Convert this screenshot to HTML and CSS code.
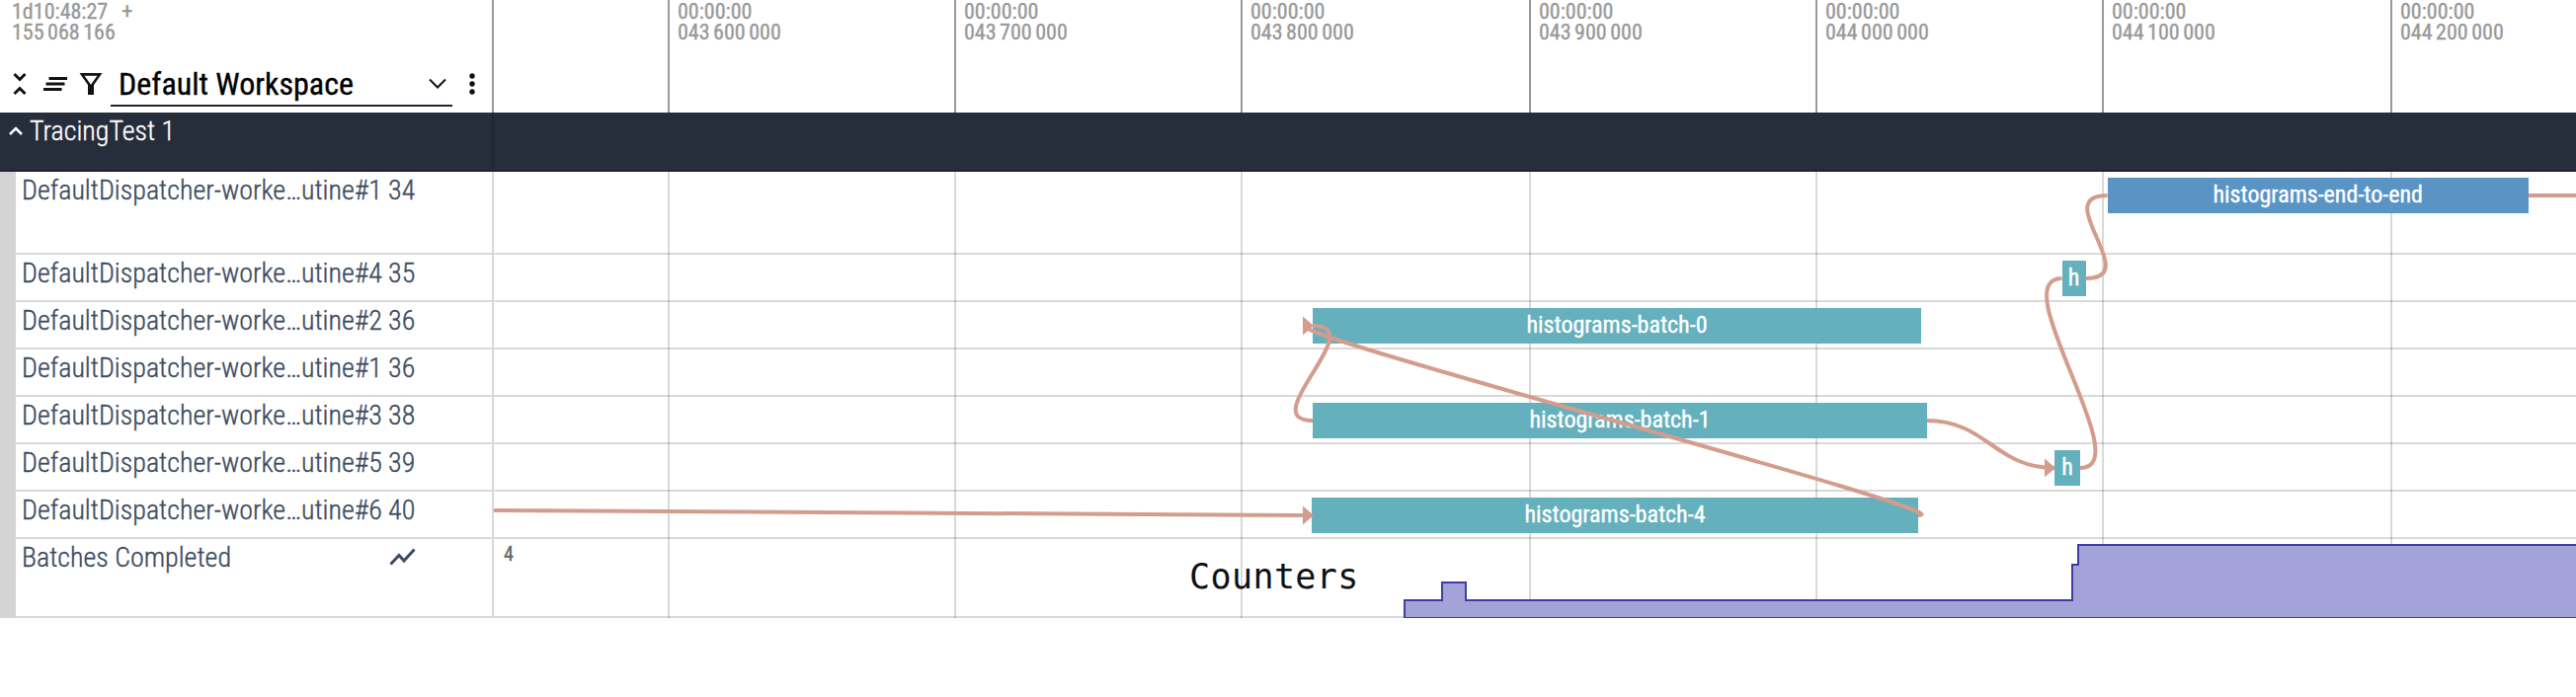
FILE: index.html
```html
<!DOCTYPE html>
<html lang="en">
<head>
<meta charset="utf-8">
<title>Trace timeline</title>
<link rel="stylesheet" href="styles.css">
</head>
<body>
<header class="header">
  <div class="shell">
    <div class="stamp"><div>1d10:48:27<span class="plus">+</span></div><div>155<i></i>068<i></i>166</div></div>
    <div class="toolbar">
      <svg class="ic-collapse" width="14" height="24" viewBox="0 0 14 24"><path d="M1.5 2 7 7.500l5.500-5.500M1.500 22 7 16.500l5.500 5.500"/></svg>
      <svg class="ic-sort" width="24" height="14" viewBox="0 0 24 14"><path d="M5.500 1.500H24M2.500 7H21.500M0 12.500H18.500"/></svg>
      <svg class="ic-filter" width="24" height="22" viewBox="0 0 24 22"><path fill-rule="evenodd" d="M0.500 0H23.500L15 12V22H9V12ZM5.500 2.800 12 11.800 18.500 2.800Z"/></svg>
      <div class="select"><span>Default Workspace</span>
        <svg class="ic-chevron" width="18" height="12" viewBox="0 0 18 12"><path d="M1 1.500 9 9.500 17 1.500"/></svg>
      </div>
      <svg class="ic-dots" width="6" height="22" viewBox="0 0 6 22"><circle cx="3" cy="3" r="2.700"/><circle cx="3" cy="11" r="2.700"/><circle cx="3" cy="19" r="2.700"/></svg>
    </div>
  </div>
  <div class="ticks">
    <div></div>
    <div class="tick">00:00:00<br>043<i></i>600<i></i>000</div>
    <div class="tick">00:00:00<br>043<i></i>700<i></i>000</div>
    <div class="tick">00:00:00<br>043<i></i>800<i></i>000</div>
    <div class="tick">00:00:00<br>043<i></i>900<i></i>000</div>
    <div class="tick">00:00:00<br>044<i></i>000<i></i>000</div>
    <div class="tick">00:00:00<br>044<i></i>100<i></i>000</div>
    <div class="tick">00:00:00<br>044<i></i>200<i></i>000</div>
  </div>
</header>
<div class="group">
  <div class="group-title">
    <svg class="ic-up" width="14" height="9" viewBox="0 0 14 9"><path d="M1 8 7 2l6 6"/></svg>
    <span>TracingTest 1</span>
  </div>
</div>
<main class="tracks">
  <div class="grid"><div></div><div></div><div></div><div></div><div></div><div></div><div></div><div></div></div>
  <div class="row tall"><div class="name">DefaultDispatcher-worke…utine#1 34</div>
    <div class="track"><div class="slice blue" style="left:1633.500px;width:426.500px">histograms-end-to-end</div></div></div>
  <div class="row"><div class="name">DefaultDispatcher-worke…utine#4 35</div>
    <div class="track"><div class="slice" style="left:1587.500px;width:24px">h</div></div></div>
  <div class="row"><div class="name">DefaultDispatcher-worke…utine#2 36</div>
    <div class="track"><div class="slice" style="left:829px;width:616px">histograms-batch-0</div></div></div>
  <div class="row"><div class="name">DefaultDispatcher-worke…utine#1 36</div><div class="track"></div></div>
  <div class="row"><div class="name">DefaultDispatcher-worke…utine#3 38</div>
    <div class="track"><div class="slice" style="left:829px;width:622px">histograms-batch-1</div></div></div>
  <div class="row"><div class="name">DefaultDispatcher-worke…utine#5 39</div>
    <div class="track"><div class="slice" style="left:1580px;width:26px">h</div></div></div>
  <div class="row"><div class="name">DefaultDispatcher-worke…utine#6 40</div>
    <div class="track"><div class="slice" style="left:828px;width:614px">histograms-batch-4</div></div></div>
  <div class="row counter"><div class="name">Batches Completed
      <svg class="ic-trend" width="28" height="18" viewBox="0 0 28 18"><path d="M2.500 16.500 11 7.500l5 5.500L26.500 1.500"/></svg></div>
    <div class="track"><span class="max">4</span><span class="note">Counters</span>
      <svg class="area" width="2108" height="80" viewBox="0 0 2108 80"><path d="M922 79.500V62H960V44H984V62H1598V26H1604V6H2112V79.500"/><path class="base" d="M921 79.500H2108"/></svg></div></div>
  <svg class="flows" width="2108" height="452" viewBox="500 174 2108 452">
    <path d="M500 517C560 517 1268 522 1328 522"/>
    <path d="M1329 426C1269 426 1389 330 1329 330"/>
    <path d="M1942 522C2002 522 1265 330 1325 330"/>
    <path d="M1951 426C2011 426 2020 474 2080 474"/>
    <path d="M2106 474C2166 474 2027.500 282 2087.500 282"/>
    <path d="M2111.500 282C2171.500 282 2073.500 198 2133.500 198"/>
    <path d="M2560 198H2608"/>
    <path class="head" d="M1319 512.500 1330 522 1319 531.500ZM1319 320.500 1330 330 1319 339.500ZM2070 464.500 2081 474 2070 483.500Z"/>
  </svg>
</main>
</body>
</html>
```
FILE: styles.css
```css
body { margin: 0; background: #fff; overflow: hidden; font-family: "Roboto Condensed", Roboto, sans-serif; font-stretch: 75%; white-space: nowrap; -webkit-text-stroke: .35px currentColor; }
svg { display: block; flex: none; }
svg path { fill: none; }
.header { display: flex; height: 114px; }
.shell { box-sizing: border-box; width: 500px; border-right: 2px solid #999; display: flex; flex-direction: column; justify-content: space-between; padding-top: 2px; }
.stamp, .tick { font-size: 22px; line-height: 20.500px; color: #999; }
.stamp { padding-left: 12px; }
.stamp i, .tick i { display: inline-block; width: 3.500px; }
.plus { margin-left: 14px; }
.toolbar { display: flex; align-items: center; height: 58px; }
.toolbar path { stroke: #111; stroke-width: 3; }
.ic-collapse { margin-left: 13px; }
.ic-sort { margin-left: 17px; }
.ic-filter { margin-left: 12px; }
.toolbar .ic-filter path { fill: #111; stroke: none; }
.select { display: flex; align-items: center; justify-content: space-between; box-sizing: border-box; width: 346px; height: 52px; margin: 0 0 6px 8px; padding: 8px 6px 0 8px; border-bottom: 2px solid #1e2636; font-size: 32px; color: #000; }
.toolbar .ic-chevron path { stroke-width: 2; }
.ic-dots { margin-left: 17px; fill: #111; }
.ticks, .grid { display: grid; grid-template-columns: 176px 290px 290px 292px 290px 290px 292px 188px; width: 2108px; }
.tick { border-left: 2px solid #999; padding: 2px 0 0 8px; }
.group { box-sizing: border-box; height: 60px; background: #262d3b; border-bottom: 2px solid #1f2433; }
.group-title { box-sizing: border-box; display: flex; width: 500px; height: 58px; border-right: 2px solid #1f2534; padding-left: 9px; color: #fff; font-size: 28px; line-height: 37px; font-weight: 300; }
.ic-up { margin: 14px 7px 0 0; }
.ic-up path { stroke: #fff; stroke-width: 2.500; }
.tracks { position: relative; width: 2608px; }
.grid { position: absolute; left: 500px; top: 0; height: 452px; }
.grid div + div { border-left: 2px solid rgba(0,0,0,.15); }
.row { display: flex; box-sizing: border-box; height: 48px; border-left: 16px solid #d4d4d4; }
.row.tall { height: 84px; }
.row.counter { height: 80px; }
.name { box-sizing: border-box; width: 484px; border-right: 2px solid #d9d9d9; border-bottom: 2px solid #d9d9d9; padding-left: 6px; display: flex; justify-content: space-between; font-size: 28px; line-height: 37px; font-weight: 300; color: #3c4b60; }
.ic-trend { margin: 9px 77px 0 0; }
.ic-trend path { stroke: #3c4b60; stroke-width: 3; }
.track { position: relative; box-sizing: border-box; width: 2108px; border-bottom: 2px solid rgba(0,0,0,.15); }
.slice { position: absolute; top: 6px; height: 36px; line-height: 35px; background: #65b0bd; color: #fff; font-size: 24px; display: flex; justify-content: center; }
.slice.blue { background: #5994c5; }
.max { position: absolute; left: 10px; top: 3px; font-size: 20px; line-height: 24px; color: #666; }
.note { position: absolute; left: 704px; top: 17px; font-family: "DejaVu Sans Mono", monospace; font-stretch: normal; font-size: 35px; letter-spacing: .4px; line-height: 42px; color: #111; -webkit-text-stroke: 0; }
.area, .flows { position: absolute; left: 0; top: 0; }
.area path { fill: #a3a3d9; stroke: #3f3da3; stroke-width: 2; }
.area .base { stroke-width: 1; }
.flows { left: 500px; }
.flows path { stroke: #d49c8d; stroke-width: 4; }
.flows .head { fill: #d49c8d; stroke: none; }
```
